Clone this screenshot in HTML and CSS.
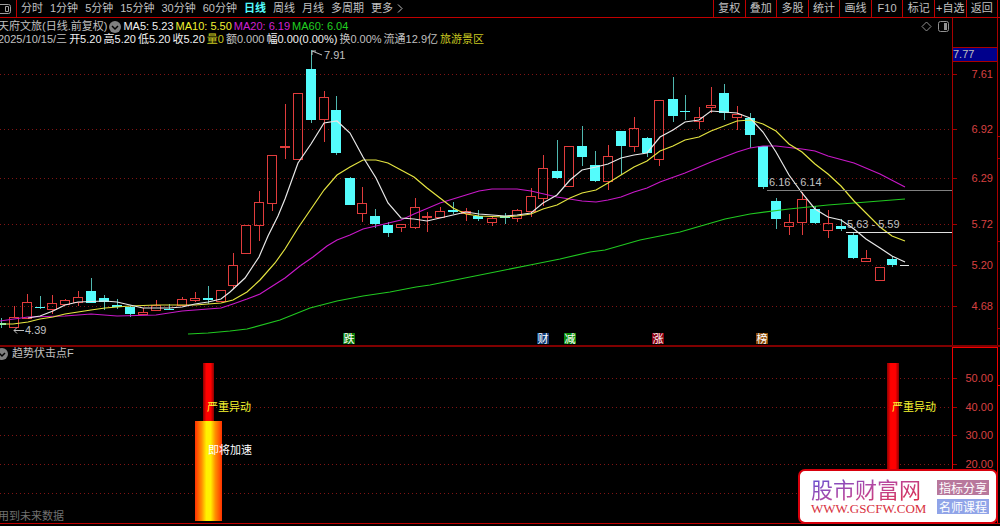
FILE: index.html
```html
<!DOCTYPE html>
<html lang="zh-CN">
<head>
    <meta charset="UTF-8">
    <title>天府文旅</title>
    <link rel="stylesheet" href="styles.css">
</head>
<body>
<div class="app">
    <header class="toolbar">
        <button class="side-btn" aria-label="侧栏">
            <svg width="14" height="12" viewBox="0 0 14 12"><rect x="-2" y="1.5" width="12.5" height="9" rx="2"/><path d="M5.5 3.5h3v5h-3z"/></svg>
        </button>
        <nav class="periods">
            <a href="#">分时</a>
            <a href="#">1分钟</a>
            <a href="#">5分钟</a>
            <a href="#">15分钟</a>
            <a href="#">30分钟</a>
            <a href="#">60分钟</a>
            <a href="#" class="current">日线</a>
            <a href="#">周线</a>
            <a href="#">月线</a>
            <a href="#">多周期</a>
            <a href="#" class="more">更多<svg width="6" height="9" viewBox="0 0 6 9"><path d="M1 .5l4 4-4 4"/></svg></a>
        </nav>
        <div class="tools">
            <button>复权</button>
            <button>叠加</button>
            <button>多股</button>
            <button>统计</button>
            <button>画线</button>
            <button>F10</button>
            <button>标记</button>
            <button>+自选</button>
            <button>返回</button>
        </div>
    </header>

    <!--K线-->
    <section class="pane main">
        <svg class="chart" id="kline" viewBox="0 18 1000 327">
            <g class="grid" id="klineGrid"></g>
            <rect class="price-box" x="953" y="48" width="44" height="13"/>
            <g class="frame">
                <path d="M952.5 18V345M997.5 18V345M952 47.5H997M952 61.5H997"/>
                <path class="edge" d="M998 136.5h2M998 158.5h2M998 241.5h2M998 328.5h2"/>
            </g>
            <text class="price" x="953" y="58">7.77</text>
            <g id="candles"></g>
            <g id="lines"></g>
            <path class="gap-line" d="M767 190.5H952"/>
            <path class="gap-line bright" d="M846 232.5H952"/>
            <path class="last" d="M900 265.5h9"/>
            <path class="arrow" d="M312 55V51h4M312 51l10 4"/>
            <path class="arrow" d="M24 330.5H14l3-3M14 330.5l3 3"/>
            <text x="324" y="59">7.91</text>
            <text x="25" y="334">4.39</text>
            <text x="769" y="186">6.16 - 6.14</text>
            <text x="847" y="228">5.63 - 5.59</text>
            <g class="events" id="events"></g>
            <g class="icons">
                <path d="M926.5 22l4.5 4.5-4.5 4.5-4.5-4.5z"/>
                <rect x="938.5" y="21.5" width="10" height="10" rx="2"/>
                <path class="fill" d="M944 23h3v7h-3z"/>
            </g>
        </svg>
        <div class="info">
            <div class="row ma">
                <span class="name">天府文旅(日线.前复权)</span>
                <svg class="drop" width="12" height="12" viewBox="0 0 12 12"><circle cx="6" cy="6" r="6"/><path d="M3 5l3 3 3-3"/></svg>
                <span class="white">MA5: 5.23</span>
                <span class="yellow">MA10: 5.50</span>
                <span class="magenta">MA20: 6.19</span>
                <span class="green">MA60: 6.04</span>
            </div>
            <div class="row quote">
                <span class="name">2025/10/15/三</span>
                <span class="white">开5.20</span>
                <span class="white">高5.20</span>
                <span class="white">低5.20</span>
                <span class="white">收5.20</span>
                <span class="olive">量0</span>
                <span>额0.000</span>
                <span class="white">幅0.00(0.00%)</span>
                <span>换0.00%</span>
                <span>流通12.9亿</span>
                <span class="olive">旅游景区</span>
            </div>
        </div>
    </section>

    <!--副图指标-->
    <section class="pane sub">
        <svg class="chart" viewBox="0 347 1000 176">
            <defs>
                <linearGradient id="red">
                    <stop offset="0" stop-color="#8c0000"/>
                    <stop offset=".3" stop-color="#ff0000"/>
                    <stop offset=".7" stop-color="#ff0000"/>
                    <stop offset="1" stop-color="#8c0000"/>
                </linearGradient>
                <linearGradient id="gold">
                    <stop offset="0" stop-color="#ff3000"/>
                    <stop offset=".25" stop-color="#ff9000"/>
                    <stop offset=".42" stop-color="#fff000"/>
                    <stop offset=".58" stop-color="#fff000"/>
                    <stop offset=".75" stop-color="#ff9000"/>
                    <stop offset="1" stop-color="#ff3000"/>
                </linearGradient>
            </defs>
            <g class="grid" id="subGrid"></g>
            <g class="frame sub-frame">
                <path d="M952.5 347V523M997.5 347V523M952 347.5H998"/>
                <path class="edge" d="M998 385.5h2"/>
            </g>
            <rect x="203" y="363" width="11" height="58" fill="url(#red)"/>
            <rect x="195" y="421" width="27" height="100" fill="url(#gold)"/>
            <rect x="887" y="363" width="12" height="160" fill="url(#red)"/>
            <text class="warn" x="207" y="411">严重异动</text>
            <text class="go" x="208" y="454">即将加速</text>
            <text class="warn" x="892" y="411">严重异动</text>
        </svg>
        <div class="info">
            <div class="row title">
                <svg class="drop" width="12" height="12" viewBox="0 0 12 12"><circle cx="6" cy="6" r="6"/><path d="M3 5l3 3 3-3"/></svg>
                <span>趋势伏击点F</span>
            </div>
            <div class="row note">用到未来数据</div>
        </div>
    </section>

    <a class="logo" href="#">
        <span class="site">
            <span class="site-name">股市财富网</span>
            <span class="site-url">WWW.GSCFW.COM</span>
        </span>
        <span class="tags">
            <span class="tag pink">指标分享</span>
            <span class="tag blue">名师课程</span>
        </span>
    </a>
</div>
<script src="chart.js"></script>
</body>
</html>
```
FILE: styles.css
```css
* {
    box-sizing: border-box;
    margin: 0;
    padding: 0;
}

body {
    background: #000;
    color: #c0c0c0;
    font: 11px/13px "Liberation Sans", "Noto Sans CJK SC", sans-serif;
    overflow-x: hidden;
}

a {
    color: inherit;
    text-decoration: none;
}

button {
    border: 0;
    background: none;
    color: inherit;
    font: inherit;
    cursor: pointer;
}

.app {
    position: relative;
    background: #000;
}

/* 顶部工具栏 */
.toolbar {
    display: flex;
    height: 18px;
    padding-right: 2px;
    border-bottom: 1px solid #c00000;
    line-height: 17px;
    white-space: nowrap;
}

.side-btn {
    display: flex;
    align-items: center;
    width: 17px;
    border-right: 1px solid #c00000;
}

.side-btn svg {
    fill: none;
    stroke: #a0a0a0;
}

.periods {
    display: flex;
    gap: 7px;
    padding-left: 4px;
}

.periods .current {
    color: #54fcfc;
    font-weight: bold;
}

.more {
    display: flex;
    align-items: center;
    gap: 4px;
}

.more svg {
    fill: none;
    stroke: #c0c0c0;
}

.tools {
    display: flex;
    width: 285px;
    margin-left: auto;
    border-right: 1px solid #c00000;
}

.tools button {
    flex: 1;
    border-left: 1px solid #c00000;
    text-align: center;
}

/* 图表 */
.pane {
    display: grid;
    border-bottom: 1px solid #c00000;
}

.main {
    border-bottom: 2px solid #800000;
}

.chart,
.info {
    grid-area: 1 / 1;
}

.chart {
    display: block;
    width: 100%;
    height: auto;
}

.chart text {
    fill: #c0c0c0;
    font-size: 11px;
}

.info {
    display: flex;
    flex-direction: column;
    z-index: 1;
    padding-top: 2px;
    white-space: nowrap;
}

.row {
    display: flex;
    align-items: center;
    height: 13px;
}

.ma {
    gap: 2px;
}

.quote {
    gap: 2px;
}

.name {
    margin-left: -2px;
}

.drop circle {
    fill: #808080;
}

.drop path {
    fill: none;
    stroke: #000;
    stroke-width: 1.5;
}

.white {
    color: #f0f0f0;
}

.yellow {
    color: #f0f030;
}

.magenta {
    color: #d020d0;
}

.green {
    color: #20d020;
}

.olive {
    color: #c8c820;
}

.grid path {
    stroke: #801414;
    stroke-dasharray: 1 3;
    shape-rendering: crispEdges;
}

.grid .tick {
    stroke: #a00000;
    stroke-dasharray: none;
}

.chart .grid text {
    fill: #d84040;
    text-anchor: end;
}

.frame path {
    fill: none;
    stroke: #a80000;
    shape-rendering: crispEdges;
}

.sub-frame path {
    stroke: #f00000;
}

.price-box {
    fill: #00008c;
}

.up {
    fill: none;
    stroke: #e03c3c;
    shape-rendering: crispEdges;
}

.down {
    fill: #54fcfc;
    stroke: none;
    shape-rendering: crispEdges;
}

.wick {
    stroke: #50b8b0;
    shape-rendering: crispEdges;
}

.line {
    fill: none;
    stroke-width: 1.2;
}

.ma5 {
    stroke: #e8e8e8;
}

.ma10 {
    stroke: #e4e440;
}

.ma20 {
    stroke: #c818c8;
}

.ma60 {
    stroke: #20c820;
}

.gap-line {
    stroke: #808080;
}

.bright,
.last {
    stroke: #e0e0e0;
}

.arrow {
    fill: none;
    stroke: #c0c0c0;
}

.chart .events text {
    fill: #fff;
    text-anchor: middle;
}

.icons {
    fill: none;
    stroke: #909090;
}

.icons .fill {
    fill: #909090;
    stroke: none;
}

.chart .warn {
    fill: #f8f830;
}

.chart .go {
    fill: #fff;
}

/* 副图 */
.sub .info {
    justify-content: space-between;
    padding: 0;
}

.title {
    gap: 4px;
    margin-left: -4px;
}

.note {
    margin-left: -2px;
    color: #707070;
}

/* 右下角标志 */
.logo {
    position: absolute;
    right: 2px;
    bottom: 0;
    z-index: 2;
    display: flex;
    align-items: center;
    justify-content: space-between;
    width: 200px;
    height: 55px;
    padding: 0 7px 0 11px;
    border: 2px solid #d8000c;
    border-radius: 7px;
    background: #fff;
    white-space: nowrap;
}

.site,
.tags {
    display: flex;
    flex-direction: column;
}

.site-name {
    background: linear-gradient(160deg, #5a50d8, #b848a0 50%, #e02840);
    background-clip: text;
    -webkit-background-clip: text;
    color: transparent;
    font: 22px/25px "Noto Sans CJK SC", sans-serif;
}

.site-url {
    color: #d83040;
    font: 13px/16px "Liberation Serif", serif;
}

.tags {
    gap: 4px;
}

.tag {
    padding: 0 2px;
    color: #fff;
    font: 12px/15px "Noto Sans CJK SC", sans-serif;
}

.pink {
    background: #b8789c;
}

.blue {
    background: #90a4e8;
}
```
FILE: chart.js
```js
//价格刻度: [y, 文字]
var priceTicks = [[74, "7.61"], [129, "6.92"], [178, "6.29"], [224, "5.72"], [265, "5.20"], [306, "4.68"]];
var subTicks = [[378, "50.00"], [407, "40.00"], [435, "30.00"], [464, "20.00"], [493, ""]];

//K线: [x, 最高, 实体上沿, 实体下沿, 最低, 阳线1/阴线0]
var candles = [
    [1, 318, 323, 325, 328, 0], [14, 306, 317, 327, 328, 1], [27, 294, 302, 318, 318, 1], [40, 296, 307, 308, 309, 0],
    [52, 295, 303, 309, 314, 1], [65, 299, 300, 304, 305, 1], [78, 291, 297, 302, 306, 1], [91, 278, 291, 303, 303, 0],
    [104, 295, 298, 302, 310, 0], [117, 299, 305, 307, 309, 0], [130, 306, 307, 314, 317, 0], [143, 308, 312, 314, 315, 1],
    [156, 300, 305, 310, 311, 1], [169, 304, 309, 310, 310, 0], [182, 297, 299, 305, 305, 1], [195, 292, 298, 300, 302, 1],
    [208, 286, 298, 300, 304, 0], [221, 290, 290, 301, 301, 1], [233, 253, 265, 285, 289, 1], [246, 225, 225, 253, 253, 1],
    [259, 191, 202, 225, 241, 1], [272, 155, 155, 203, 211, 1], [285, 104, 146, 147, 159, 1], [298, 93, 93, 159, 159, 1],
    [311, 50, 69, 120, 123, 0], [324, 91, 97, 119, 142, 1], [336, 96, 110, 153, 155, 0], [350, 177, 178, 205, 205, 0],
    [362, 187, 203, 213, 222, 1], [375, 209, 216, 224, 228, 0], [388, 222, 225, 233, 237, 0], [401, 224, 224, 227, 232, 1],
    [415, 198, 207, 227, 229, 1], [427, 212, 216, 217, 232, 1], [440, 207, 211, 217, 217, 1], [453, 202, 210, 212, 214, 0],
    [466, 208, 211, 213, 221, 1], [478, 210, 216, 219, 221, 0], [492, 216, 218, 222, 226, 1], [505, 213, 216, 218, 224, 0],
    [517, 209, 210, 218, 222, 1], [531, 188, 196, 211, 217, 1], [543, 155, 168, 198, 206, 1], [557, 140, 171, 178, 179, 0],
    [569, 146, 146, 186, 187, 1], [582, 126, 146, 157, 166, 0], [595, 151, 165, 181, 182, 0], [608, 145, 156, 181, 190, 1],
    [621, 131, 131, 146, 175, 0], [634, 117, 128, 146, 152, 1], [647, 137, 138, 153, 157, 0], [659, 100, 100, 159, 166, 1],
    [673, 77, 99, 116, 122, 0], [685, 95, 111, 112, 120, 0], [699, 107, 117, 121, 129, 1], [711, 87, 105, 107, 113, 1],
    [724, 84, 93, 113, 120, 0], [737, 106, 114, 117, 130, 1], [750, 113, 118, 135, 148, 0], [763, 146, 146, 187, 189, 0],
    [776, 198, 201, 219, 229, 0], [789, 214, 222, 226, 235, 1], [802, 192, 199, 222, 235, 1], [815, 206, 209, 223, 224, 0],
    [828, 210, 223, 230, 238, 1], [841, 219, 226, 229, 231, 0], [853, 233, 235, 258, 259, 0], [866, 250, 258, 261, 262, 1],
    [880, 267, 267, 280, 280, 1], [892, 256, 259, 265, 267, 0]
];

//均线
var lines = {
    ma60: "188,334 208,333 230,331 247,329 280,320 310,308 337,301 363,296 390,292 416,287 430,285 470,277 500,271 530,265 560,259 590,252 605,250 640,240 680,232 725,219 750,214 789,209 828,205 867,202 905,199",
    ma20: "0,321 28,317 65,316 91,314 117,316 156,315 182,311 221,308 233,304 247,299 260,294 285,278 300,266 313,257 327,246 337,240 350,235 363,229 376,226 401,220 414,214 440,203 466,195 479,191 492,189 517,189 531,191 557,197 582,201 596,202 608,200 621,197 634,192 647,188 660,182 685,173 711,162 737,152 750,148 763,146 776,146 802,149 815,151 828,156 854,163 880,174 905,187",
    ma10: "0,324 13,324 28,322 40,319 53,317 65,314 78,312 91,310 105,308 117,307 130,306 156,305 195,305 208,304 221,303 233,300 247,292 260,280 275,263 285,249 298,228 311,209 324,190 337,175 350,167 363,160 376,160 388,163 401,170 414,177 427,188 440,198 453,208 466,214 479,216 505,217 517,216 531,214 543,209 557,205 570,198 582,193 596,190 608,183 621,175 634,167 647,161 660,151 673,146 685,140 699,137 711,131 724,126 737,121 750,120 763,124 776,131 789,144 802,152 815,164 828,174 841,186 854,201 866,213 880,227 892,236 905,241",
    ma5: "28,318 40,316 53,311 65,305 78,302 105,301 117,302 130,305 143,308 169,308 182,307 195,304 208,302 221,299 230,292 245,278 259,257 268,236 278,216 285,199 298,163 311,144 324,123 337,121 350,133 363,157 376,178 388,203 401,218 414,219 427,221 440,218 453,215 466,212 479,214 492,215 505,216 517,215 531,213 543,203 557,195 570,180 582,170 596,167 608,164 621,158 634,155 647,153 660,137 673,130 685,122 699,120 711,111 724,112 737,113 750,118 763,132 776,152 789,175 802,193 815,209 828,217 841,220 854,229 866,239 880,248 892,256 905,262"
};

//底部事件: [x, 文字, 背景色]
var events = [[349, "跌", "#0a7a0a"], [543, "财", "#103c78"], [570, "减", "#0a8a0a"], [658, "涨", "#8c0010"], [762, "榜", "#8c4c08"]];

function grid(ticks) {
    return ticks.map(function (t) {
        var y = t[0] + 0.5;
        return '<path d="M0 ' + y + 'H952"/><path class="tick" d="M952 ' + y + 'h5"/>' +
            '<text x="993" y="' + (t[0] + 4) + '">' + t[1] + '</text>';
    }).join("");
}

function candle(c) {
    var x = c[0] + 0.5;
    if (c[5]) {
        return '<path class="up" d="M' + x + ' ' + c[1] + 'V' + c[2] + 'M' + x + ' ' + c[3] + 'V' + c[4] + '"/>' +
            '<rect class="up" x="' + (x - 5) + '" y="' + (c[2] + 0.5) + '" width="9" height="' + (c[3] - c[2]) + '"/>';
    }
    return '<path class="wick" d="M' + x + ' ' + c[1] + 'V' + c[4] + '"/>' +
        '<rect class="down" x="' + (c[0] - 5) + '" y="' + c[2] + '" width="10" height="' + (c[3] - c[2]) + '"/>';
}

document.getElementById("klineGrid").innerHTML = grid(priceTicks);
document.getElementById("subGrid").innerHTML = grid(subTicks);
document.getElementById("candles").innerHTML = candles.map(candle).join("");
document.getElementById("lines").innerHTML = Object.keys(lines).map(function (k) {
    return '<polyline class="line ' + k + '" points="' + lines[k] + '"/>';
}).join("");
document.getElementById("events").innerHTML = events.map(function (e) {
    return '<rect x="' + (e[0] - 6) + '" y="333" width="12" height="11" fill="' + e[2] + '"/>' +
        '<text x="' + e[0] + '" y="343">' + e[1] + '</text>';
}).join("");
```
